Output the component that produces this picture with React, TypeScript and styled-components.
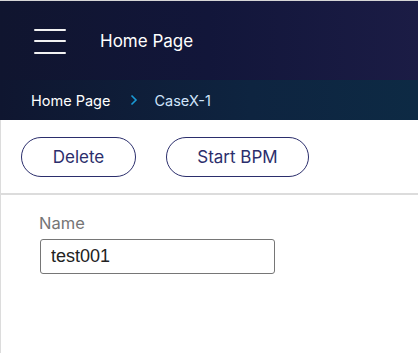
import styled, { createGlobalStyle } from "styled-components";

const GlobalStyle = createGlobalStyle`
  html, body {
    margin: 0;
    padding: 0;
    background: #fff;
    font-family: Inter, Roboto, "Liberation Sans", sans-serif;
  }
`;

const crumbs = ["Home Page", "CaseX-1"];

function App() {
  return (
    <>
      <GlobalStyle />
      <Page>
        <Header>
          <MenuButton aria-label="menu">
            <MenuLine />
            <MenuLine />
            <MenuLine />
          </MenuButton>
          <Title>Home Page</Title>
        </Header>
        <Breadcrumbs>
          {crumbs.map((c, i) => (
            <Crumb key={c} $current={i === crumbs.length - 1}>
              {i > 0 && (
                <Chevron viewBox="0 0 8 12">
                  <path d="M1.5 1.5 L6 6 L1.5 10.5" fill="none" stroke="#1a9ad6" strokeWidth="1.6" />
                </Chevron>
              )}
              {c}
            </Crumb>
          ))}
        </Breadcrumbs>
        <Content>
          <Toolbar>
            <PillButton>Delete</PillButton>
            <PillButton $wide>Start BPM</PillButton>
          </Toolbar>
          <Form>
            <Label htmlFor="name">Name</Label>
            <Input id="name" defaultValue="test001" />
          </Form>
        </Content>
      </Page>
    </>
  );
}

const Page = styled.div`
  border-top: 1px solid #d6d6d6;
  min-height: 352px;
  display: flex;
  flex-direction: column;
`;
const Header = styled.header`
  display: flex;
  align-items: center;
  height: 79px;
  padding-left: 34px;
  background: linear-gradient(90deg, #10152f 0%, #12163a 50%, #1b1c45 100%);
`;
const MenuButton = styled.div`
  display: flex;
  flex-direction: column;
  gap: 9.5px;
  width: 32px;
  margin-top: 1px;
`;
const MenuLine = styled.span`
  display: block;
  height: 2px;
  background: #f2f2f2;
  border-radius: 1px;
`;
const Title = styled.span`
  margin-left: 34px;
  color: #fff;
  font-size: 17px;
`;
const Breadcrumbs = styled.nav`
  display: flex;
  align-items: center;
  height: 40px;
  padding-left: 31px;
  background: linear-gradient(90deg, #0f1630 0%, #0e2440 60%, #0d2a44 100%);
`;
const Crumb = styled.span<{ $current?: boolean }>`
  display: flex;
  align-items: center;
  font-size: 14.5px;
  color: ${(p) => (p.$current ? "#cfe4fb" : "#ffffff")};
`;
const Chevron = styled.svg`
  width: 8px;
  height: 12px;
  margin: 0 16px 0 20px;
`;
const Content = styled.main`
  flex: 1;
  border-left: 1px solid #dcdcdc;
`;
const Toolbar = styled.div`
  display: flex;
  gap: 30px;
  padding: 17px 20px 16px;
  border-bottom: 2px solid #dcdcdc;
`;
const PillButton = styled.button<{ $wide?: boolean }>`
  box-sizing: border-box;
  height: 40px;
  width: ${(p) => (p.$wide ? "143px" : "115px")};
  border: 1px solid #2b2e6c;
  border-radius: 20px;
  background: #fff;
  color: #2b2e6c;
  font-family: Inter, Roboto, "Liberation Sans", sans-serif;
  font-size: 17px;
  padding: 0;
`;
const Form = styled.div`
  display: flex;
  flex-direction: column;
  align-items: flex-start;
  padding: 19px 0 0 38px;
`;
const Label = styled.label`
  color: #757575;
  font-size: 16.5px;
  line-height: 19px;
  margin-bottom: 6px;
`;
const Input = styled.input`
  box-sizing: border-box;
  width: 235px;
  height: 35px;
  margin-left: 1px;
  border: 1px solid #767676;
  border-radius: 3px;
  padding: 0 10px;
  font-family: "Liberation Sans", Arial, sans-serif;
  font-size: 18px;
  color: #222;
  outline: none;
`;

export default App;
